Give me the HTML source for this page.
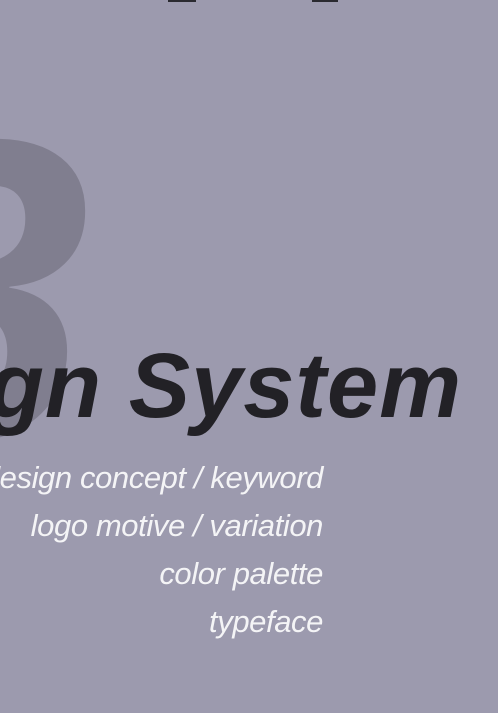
<!DOCTYPE html>
<html><head><meta charset="utf-8"><style>
html,body{margin:0;padding:0;}
body{width:498px;height:713px;overflow:hidden;background:#9c9aae;position:relative;font-family:"Liberation Sans",sans-serif;}
.three{position:absolute;right:408px;top:76px;font-size:430px;line-height:430px;font-style:italic;font-weight:bold;color:#807e8f;white-space:nowrap;}
.title{position:absolute;right:36px;top:340px;font-size:92px;line-height:92px;font-style:italic;font-weight:bold;color:#222126;white-space:nowrap;letter-spacing:1px;}
.sub{position:absolute;right:175px;top:454px;text-align:right;font-size:31px;line-height:48px;font-style:italic;color:#f4f4f6;white-space:nowrap;letter-spacing:-0.4px;}
.top{position:absolute;top:0;height:2px;background:#2a2a30;}
</style></head><body>
<div class="top" style="left:168px;width:28px"></div>
<div class="top" style="left:312px;width:26px"></div>
<div class="three">3</div>
<div class="title">Design System</div>
<div class="sub">design concept / keyword<br>logo motive / variation<br>color palette<br>typeface</div>
</body></html>
